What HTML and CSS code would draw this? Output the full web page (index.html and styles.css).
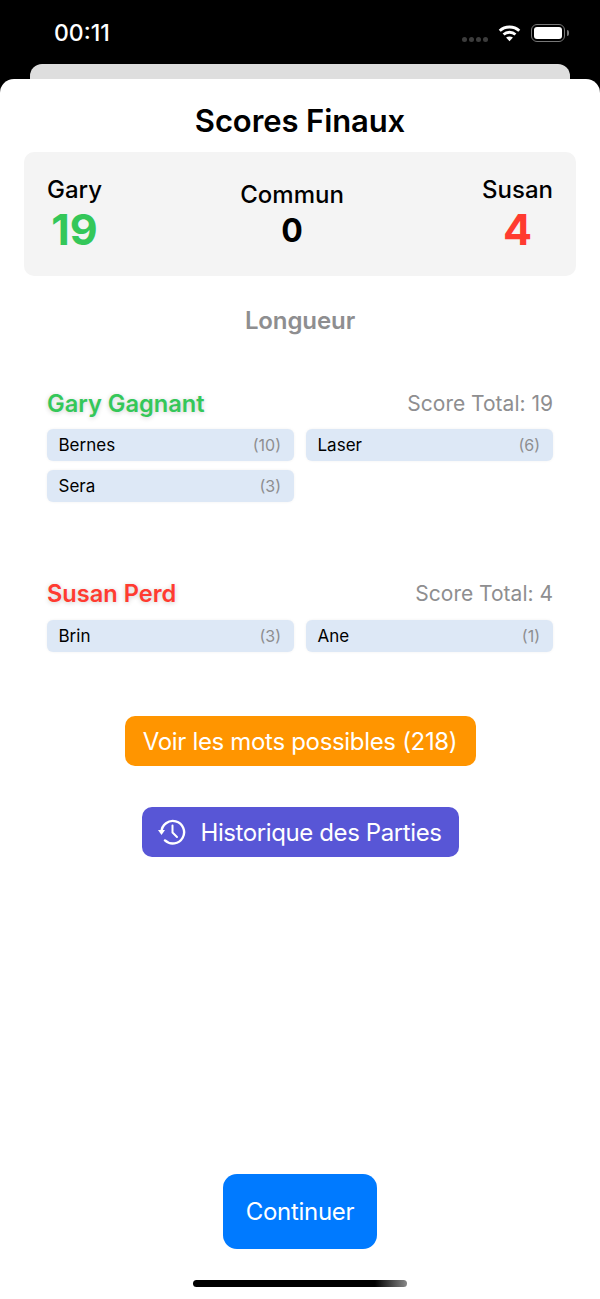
FILE: index.html
```html
<!DOCTYPE html>
<html lang="fr">
<head>
    <meta charset="UTF-8">
    <meta name="viewport" content="width=device-width, initial-scale=1.0">
    <title>Scores Finaux</title>
    <link rel="stylesheet" href="styles.css">
</head>
<body>
    <!-- Barre de statut -->
    <div class="status-bar">
        <span class="time">00:11</span>
        <div class="status-icons">
            <div class="signal"><i></i><i></i><i></i><i></i></div>
            <svg class="wifi" width="23" height="18" viewBox="0 0 24 18" fill="none" stroke="#fff" stroke-width="3">
                <path d="M1.8 6.6C7.4 1.4 16.6 1.4 22.2 6.6"/>
                <path d="M5.8 10.6C9.2 7.5 14.8 7.5 18.2 10.6"/>
                <path d="M12 17.6 8.4 13.8C10.400 12.2 13.600 12.200 15.600 13.800Z" fill="#fff" stroke="none"/>
            </svg>
            <div class="battery"><div class="battery-fill"></div></div>
        </div>
    </div>
    <div class="back-sheet"></div>

    <div class="sheet">
        <h1 class="title">Scores Finaux</h1>

        <div class="score-card">
            <div class="score-col">
                <span class="score-name">Gary</span>
                <span class="score-value green">19</span>
            </div>
            <div class="score-col score-common">
                <span class="score-name">Commun</span>
                <span class="score-value small">0</span>
            </div>
            <div class="score-col">
                <span class="score-name">Susan</span>
                <span class="score-value red">4</span>
            </div>
        </div>

        <div class="mode">Longueur</div>

        <!-- Gagnant -->
        <div class="player player-first">
            <div class="player-head">
                <span class="player-name green">Gary Gagnant</span>
                <span class="player-total">Score Total: 19</span>
            </div>
            <div class="words">
                <div class="word"><span>Bernes</span><span class="points">(10)</span></div>
                <div class="word"><span>Laser</span><span class="points">(6)</span></div>
                <div class="word"><span>Sera</span><span class="points">(3)</span></div>
            </div>
        </div>

        <!-- Perdant -->
        <div class="player player-second">
            <div class="player-head">
                <span class="player-name red">Susan Perd</span>
                <span class="player-total">Score Total: 4</span>
            </div>
            <div class="words">
                <div class="word"><span>Brin</span><span class="points">(3)</span></div>
                <div class="word"><span>Ane</span><span class="points">(1)</span></div>
            </div>
        </div>

        <div class="actions">
            <button type="button" class="btn btn-orange">Voir les mots possibles (218)</button>
            <button type="button" class="btn btn-purple">
                <svg width="30" height="26" viewBox="0 0 30 26" fill="none" stroke="#fff" stroke-width="2.400">
                    <path d="M3.500 13A11.300 11.300 0 1 1 7 21.400" stroke-linecap="round"/>
                    <path d="M0 11H7L3.500 16Z" fill="#fff" stroke="none"/>
                    <path d="M14.500 6.500V13.500L19 18" stroke-width="2" stroke-linecap="round" stroke-linejoin="round"/>
                </svg>
                Historique des Parties
            </button>
        </div>

        <button type="button" class="btn btn-continue">Continuer</button>
        <div class="home-indicator"></div>
    </div>
</body>
</html>
```

FILE: styles.css
```css
* {
    margin: 0;
    padding: 0;
    box-sizing: border-box;
}

html, body {
    height: 100%;
}

body {
    font-family: Inter, "Liberation Sans", sans-serif;
    background-color: #000;
    color: #000;
    overflow: hidden;
}

/* Barre de statut */
.status-bar {
    height: 64px;
    padding: 2px 35px 0 54px;
    display: flex;
    justify-content: space-between;
    align-items: center;
    color: #fff;
}

.time {
    font-size: 23px;
    font-weight: 500;
}

.status-icons {
    display: flex;
    align-items: center;
}

.signal {
    display: flex;
    gap: 2px;
    margin: 12px 10px 0 0;
}

.signal i {
    width: 5px;
    height: 5px;
    border-radius: 50%;
    background-color: #3c3c3c;
}

.wifi {
    margin-right: 10px;
}

.battery {
    width: 34px;
    height: 18px;
    padding: 2px;
    border: 1.5px solid #777;
    border-radius: 6px;
    position: relative;
}

.battery::after {
    content: "";
    position: absolute;
    right: -4.500px;
    top: 4.500px;
    width: 2px;
    height: 6px;
    border-radius: 0 2px 2px 0;
    background-color: #777;
}

.battery-fill {
    height: 100%;
    background-color: #fff;
    border-radius: 3px;
}

.back-sheet {
    height: 15px;
    margin: 0 30px;
    background-color: #dedede;
    border-radius: 12px 12px 0 0;
}

/* Feuille principale */
.sheet {
    height: 1220px;
    background-color: #fff;
    border-radius: 14px 14px 0 0;
    display: flex;
    flex-direction: column;
    align-items: center;
    padding-top: 22px;
}

.title {
    font-size: 31px;
    font-weight: 600;
    line-height: 40px;
    letter-spacing: -0.1px;
}

/* Carte des scores */
.score-card {
    align-self: stretch;
    height: 124px;
    margin: 11px 24px 0;
    padding: 2px 23px 0;
    background-color: #f4f4f4;
    border-radius: 10px;
    display: flex;
    justify-content: space-between;
    align-items: center;
}

.score-col {
    display: flex;
    flex-direction: column;
    align-items: center;
}

.score-name {
    font-size: 24px;
    font-weight: 500;
    line-height: 28px;
}

.score-value {
    font-size: 43px;
    font-weight: 700;
    line-height: 50px;
}

.score-value.small {
    font-size: 32px;
    line-height: 44px;
}

.score-common {
    padding-top: 4px;
}

.green {
    color: #34c759;
}

.red {
    color: #ff3b30;
}

.mode {
    margin-top: 30px;
    font-size: 24px;
    font-weight: 600;
    line-height: 30px;
    letter-spacing: -0.1px;
    color: #8e8e90;
}

/* Joueurs */
.player {
    align-self: stretch;
    padding: 0 47px;
}

.player-first {
    margin-top: 51px;
}

.player-second {
    margin-top: 75px;
}

.player-second .words {
    margin-top: 11px;
}

.player-head {
    height: 32px;
    display: flex;
    justify-content: space-between;
    align-items: center;
}

.player-name {
    font-size: 23.6px;
    font-weight: 600;
    text-shadow: 0 1px 5px rgba(0, 0, 0, 0.2);
}

.player-total {
    font-size: 21px;
    color: #8e8e90;
}

.words {
    margin-top: 10px;
    display: grid;
    grid-template-columns: 1fr 1fr;
    gap: 9px 12px;
}

.word {
    height: 32px;
    padding: 0 13px 0 11.500px;
    background-color: #dde8f6;
    border-radius: 6px;
    box-shadow: 0 0 3px rgba(0, 0, 0, 0.06);
    display: flex;
    justify-content: space-between;
    align-items: center;
    font-size: 17px;
}

.points {
    font-size: 16px;
    color: #8e8e90;
}

/* Boutons */
.btn {
    border: none;
    color: #fff;
    font-family: inherit;
    font-size: 24px;
    display: flex;
    justify-content: center;
    align-items: center;
}

.actions {
    margin-top: 64px;
    display: flex;
    flex-direction: column;
    align-items: center;
    gap: 41px;
}

.btn-orange {
    width: 351px;
    height: 50px;
    background-color: #ff9500;
    border-radius: 10px;
    letter-spacing: -0.32px;
}

.btn-purple {
    width: 317px;
    height: 50px;
    background-color: #5856d6;
    border-radius: 10px;
    gap: 12px;
    letter-spacing: -0.4px;
}

.btn-continue {
    width: 154px;
    height: 75px;
    margin-top: auto;
    background-color: #007aff;
    border-radius: 14px;
    letter-spacing: -0.3px;
}

.home-indicator {
    width: 214px;
    height: 7px;
    margin: 31px 0 12px;
    border-radius: 4px;
    background: linear-gradient(to right, #000 85%, #888 100%);
}
```
